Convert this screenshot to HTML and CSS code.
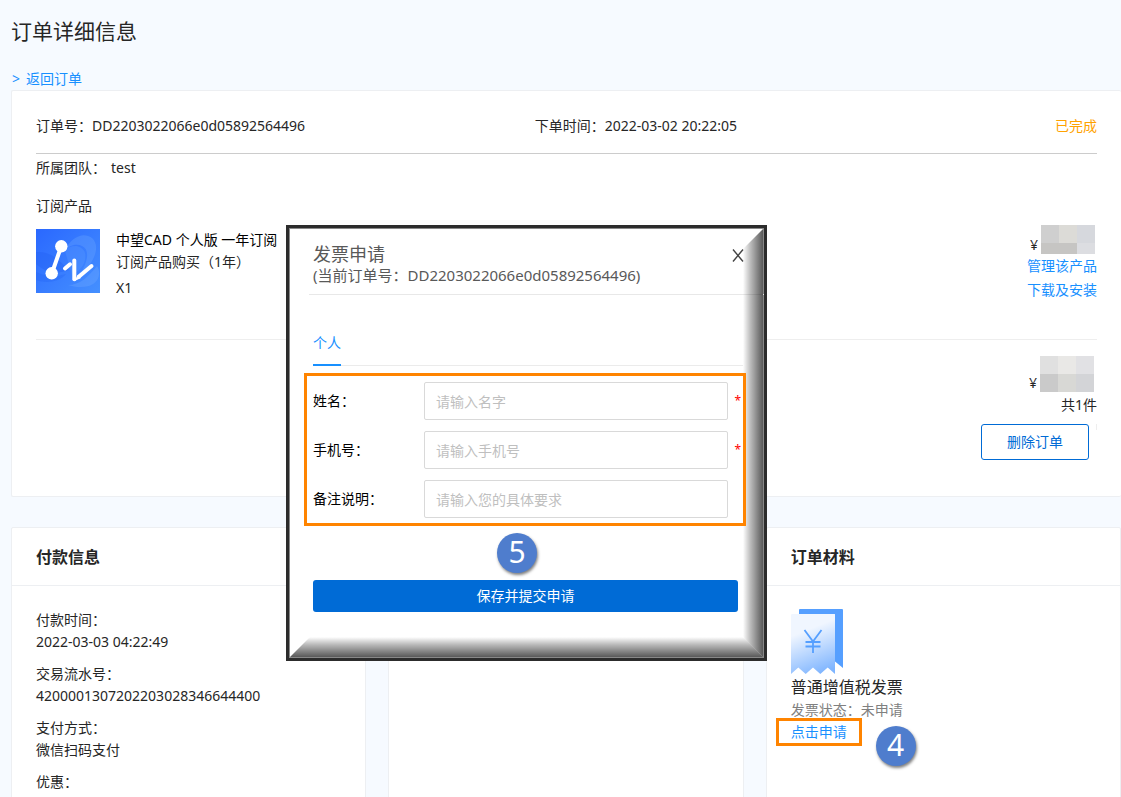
FILE: index.html
```html
<!DOCTYPE html>
<html lang="zh-CN">
<head>
<meta charset="utf-8">
<meta name="viewport" content="width=device-width, initial-scale=1">
<title>订单详细信息</title>
<link rel="stylesheet" href="styles.css">
</head>
<body>
<main class="page">
  <h1 class="page-title">订单详细信息</h1>
  <a class="back" href="#orders"><span>&gt;</span><span>返回订单</span></a>

  <section class="card order">
    <div class="order-head">
      <span class="order-no">订单号：DD2203022066e0d05892564496</span>
      <span class="order-time">下单时间：2022-03-02 20:22:05</span>
      <span class="order-status">已完成</span>
    </div>
    <p class="team">所属团队：<span class="team-name">test</span></p>
    <h2 class="sub-title">订阅产品</h2>
    <div class="product">
      <svg class="product-logo" viewBox="0 0 64 64" aria-hidden="true">
        <defs>
          <linearGradient id="logo-bg" x1="0" y1="0" x2="1" y2="1">
            <stop offset="0" stop-color="#2a68ff"/>
            <stop offset="1" stop-color="#4590ff"/>
          </linearGradient>
        </defs>
        <rect width="64" height="64" fill="url(#logo-bg)"/>
        <path d="M0 23C14 22 22 30 33 41C20 46 9 43 0 35Z" fill="#1d5af0" opacity=".3"/>
        <path d="M29 22C34 9 47 2 56 9C66 18 56 37 45 44C53 30 53 20 46 17C40 14 32 17 29 22Z" fill="#69a5ff" opacity=".35"/>
        <path d="M29 22C34 15 46 15 49 24C51 34 44 42 36 46Z" fill="#5595ff" opacity=".4"/>
        <path d="M32 56C44 56 52 48 61 37C66 45 62 54 53 57C45 59 38 58 32 56Z" fill="#69a5ff" opacity=".4"/>
        <path d="M0 43C10 48 20 48 30 45C24 53 10 55 0 51Z" fill="#1d5af0" opacity=".25"/>
        <g fill="none" stroke="#fff" stroke-width="4" stroke-linecap="round">
          <path d="M25 18L16 44"/>
          <path d="M29 39.500L34 35.300"/>
          <path d="M38.300 31.500V50.300"/>
          <path d="M43 47.500L55.500 37"/>
        </g>
        <path d="M38.300 52.300L45 49L41.500 46Z" fill="#fff"/>
        <circle cx="25.300" cy="17.300" r="6.200" fill="#fff"/>
        <circle cx="15.700" cy="44.300" r="6.200" fill="#fff"/>
      </svg>
      <div class="product-text">
        <p class="product-name">中望CAD 个人版 一年订阅</p>
        <p>订阅产品购买（1年）</p>
        <p class="product-count">X1</p>
      </div>
      <div class="product-side">
        <div class="price">
          <span>¥</span>
          <svg width="54" height="29" viewBox="0 0 54 29" shape-rendering="crispEdges" aria-hidden="true">
            <rect width="18" height="18" fill="#cfcfcf"/>
            <rect x="18" width="18" height="18" fill="#dcdbd7"/>
            <rect x="36" width="18" height="18" fill="#d6d8dd"/>
            <rect y="18" width="36" height="11" fill="#c6c5c3"/>
            <rect x="36" y="18" width="18" height="11" fill="#dcdde1"/>
          </svg>
        </div>
        <a href="#manage">管理该产品</a>
        <a href="#download">下载及安装</a>
      </div>
    </div>
    <div class="total">
      <div class="price">
        <span>¥</span>
        <svg width="54" height="36" viewBox="0 0 54 36" shape-rendering="crispEdges" aria-hidden="true">
          <rect width="18" height="18" fill="#e0e0e0"/>
          <rect x="18" width="18" height="18" fill="#e9e8e6"/>
          <rect x="36" width="18" height="18" fill="#e1e1e4"/>
          <rect y="18" width="18" height="18" fill="#cacaca"/>
          <rect x="18" y="18" width="18" height="18" fill="#d8d8d5"/>
          <rect x="36" y="18" width="18" height="18" fill="#d3d4d7"/>
        </svg>
      </div>
      <p class="total-count">共1件</p>
      <div class="total-actions">
        <button class="btn-outline" type="button">删除订单</button>
      </div>
    </div>
  </section>

  <div class="columns">
    <section class="card panel">
      <h2 class="panel-title">付款信息</h2>
      <dl class="panel-body facts">
        <div><dt>付款时间：</dt><dd>2022-03-03 04:22:49</dd></div>
        <div><dt>交易流水号：</dt><dd>4200001307202203028346644400</dd></div>
        <div><dt>支付方式：</dt><dd>微信扫码支付</dd></div>
        <div><dt>优惠：</dt><dd></dd></div>
      </dl>
    </section>
    <section class="card panel">
      <div class="panel-title"></div>
    </section>
    <section class="card panel">
      <h2 class="panel-title">订单材料</h2>
      <div class="panel-body materials">
        <svg class="invoice-icon" viewBox="0 0 52 65" aria-hidden="true">
          <defs>
            <linearGradient id="paper" x1=".35" y1="0" x2=".65" y2="1">
              <stop offset=".25" stop-color="#f0f6ff"/>
              <stop offset="1" stop-color="#7fb5ff"/>
            </linearGradient>
          </defs>
          <path d="M8 1Q8 0 9 0H51Q52 0 52 1V59L44 52.500V6Q44 5 43 5H8Z" fill="#559fff"/>
          <path d="M0 6Q0 5 1 5H43Q44 5 44 6V65L36.700 58.500L29.300 65L22 58.500L14.700 65L7.300 58.500L0 65Z" fill="url(#paper)"/>
          <path d="M13.500 21L22 32.500L30.500 21M22 32.500V44M14.500 33H29.500M14.500 37.500H29.500" fill="none" stroke="#559fff" stroke-width="1.800"/>
        </svg>
        <h3 class="invoice-name">普通增值税发票</h3>
        <p class="invoice-state">发票状态：未申请</p>
        <a class="apply" href="#apply">点击申请<span class="step step-four">4</span></a>
      </div>
    </section>
  </div>
</main>

<div class="modal" role="dialog" aria-labelledby="modal-title">
  <header class="modal-head">
    <div>
      <h2 class="modal-title" id="modal-title">发票申请</h2>
      <p class="modal-sub">(当前订单号：DD2203022066e0d05892564496)</p>
    </div>
    <button class="close" type="button" aria-label="关闭">
      <svg width="12" height="13" viewBox="0 0 12 13" aria-hidden="true"><path d="M1 .5L11 12.500M11 .5L1 12.500" stroke="#444" stroke-width="1.400" fill="none"/></svg>
    </button>
  </header>
  <form class="modal-form">
    <div class="tabs" role="tablist">
      <button class="tab" type="button" role="tab" aria-selected="true">个人</button>
    </div>
    <div class="fields">
      <label for="name">姓名：</label>
      <input id="name" type="text" placeholder="请输入名字" required>
      <span class="required">*</span>
      <label for="phone">手机号：</label>
      <input id="phone" type="tel" placeholder="请输入手机号" required>
      <span class="required">*</span>
      <label for="remark">备注说明：</label>
      <input id="remark" type="text" placeholder="请输入您的具体要求">
    </div>
    <span class="step step-five">5</span>
    <button class="btn-primary" type="submit">保存并提交申请</button>
  </form>
</div>
</body>
</html>
```

FILE: styles.css
```css
* {
  box-sizing: border-box;
}

body {
  position: relative;
  margin: 0;
  min-height: 100vh;
  overflow: hidden;
  background: #f6faff;
  color: #262626;
  font: 14px/22px "Noto Sans", "Noto Sans CJK SC", sans-serif;
}

h1, h2, h3, p, dl, dd {
  margin: 0;
}

h1, h2, h3 {
  font-weight: 400;
}

a {
  color: #1890ff;
  text-decoration: none;
}

button, input {
  font: inherit;
}

.page {
  height: 100vh;
  padding: 16px 0 0 11px;
  overflow: hidden;
}

.page-title {
  font-size: 21px;
  line-height: 30px;
}

.back {
  display: flex;
  gap: 6px;
  margin: 22px 0 0 1px;
}

.card {
  background: #fff;
  border: 1px solid #edeff2;
  border-radius: 2px;
}

/* Order summary */
.order {
  padding: 0 24px 36px;
  border-right: 0;
}

.order-head {
  display: grid;
  grid-template-columns: 47% 1fr auto;
  padding: 24px 0 16px;
  border-bottom: 1px solid #ccc;
}

.order-status {
  color: #ffa200;
}

.team {
  margin-top: 3px;
}

.team-name {
  margin-left: 5px;
}

.sub-title {
  margin-top: 16px;
  font-size: 14px;
}

.product {
  display: flex;
  min-height: 123px;
  border-bottom: 1px solid #eee;
}

.product-logo {
  width: 64px;
  height: 64px;
  margin-top: 12px;
}

.product-text {
  flex: 1;
  margin: 12px 0 0 16px;
}

.product-name {
  color: #000;
}

.product-count {
  margin-top: 4px;
}

.product-side {
  display: flex;
  flex-direction: column;
  align-items: flex-end;
  padding-top: 8px;
  line-height: 24px;
}

.price {
  display: flex;
  align-items: flex-end;
  gap: 3px;
  margin-right: 2px;
  line-height: 18px;
}

.total {
  display: flex;
  flex-direction: column;
  align-items: flex-end;
  padding-top: 16px;
}

.total .price {
  margin-right: 3px;
}

.total-count {
  margin-top: 2px;
}

.total-actions {
  margin-top: 8px;
  padding-right: 8px;
  background: linear-gradient(#eee, #eee) right top / 1px 6px no-repeat;
}

.btn-outline {
  width: 108px;
  height: 36px;
  padding: 0;
  background: #fff;
  border: 1px solid #006bd6;
  border-radius: 3px;
  color: #006bd6;
}

/* Detail panels */
.columns {
  display: grid;
  grid-template-columns: repeat(3, 1fr);
  gap: 22px;
  margin-top: 30px;
}

.panel {
  min-height: 320px;
}

.panel-title {
  height: 58px;
  padding: 0 24px;
  border-bottom: 1px solid #edeff2;
  font-size: 16px;
  font-weight: 700;
  line-height: 58px;
}

.panel-body {
  padding: 23px 24px;
}

.facts {
  display: grid;
  gap: 10px;
}

.materials {
  display: flex;
  flex-direction: column;
  align-items: flex-start;
}

.invoice-icon {
  width: 52px;
  height: 65px;
}

.invoice-name {
  margin-top: 2px;
  font-size: 16px;
  line-height: 23px;
}

.invoice-state {
  color: #808080;
}

.apply {
  position: relative;
}

.apply::before {
  content: "";
  position: absolute;
  inset: -3px -15px;
  border: 3px solid #ff8400;
}

/* Numbered step markers */
.step {
  width: 40px;
  height: 40px;
  border-radius: 50%;
  background: #4f7dcd;
  box-shadow: 1px 2px 3px rgba(0, 0, 0, .5);
  color: #fff;
  font: 30px/38px "Noto Sans", sans-serif;
  text-align: center;
}

.step-four {
  position: absolute;
  top: 5px;
  left: 85px;
}

/* Invoice dialog */
.modal {
  position: absolute;
  top: 225px;
  left: 286px;
  width: 481px;
  padding: 15px 0 46px;
  background: #fff;
  border: 3px solid #2c2c2c;
  box-shadow: inset 0 0 0 1px #888;
}

.modal::before,
.modal::after {
  content: "";
  position: absolute;
  pointer-events: none;
}

.modal::before {
  top: 1px;
  right: 1px;
  bottom: 1px;
  width: 20px;
  background: linear-gradient(to right, rgba(0, 0, 0, 0), rgba(0, 0, 0, .25) 35%, rgba(0, 0, 0, .65));
  clip-path: polygon(100% 0, 100% 100%, 0 calc(100% - 20px), 0 20px);
}

.modal::after {
  right: 1px;
  bottom: 1px;
  left: 1px;
  height: 20px;
  background: linear-gradient(to bottom, rgba(0, 0, 0, 0), rgba(0, 0, 0, .25) 35%, rgba(0, 0, 0, .65));
  clip-path: polygon(20px 0, calc(100% - 20px) 0, 100% 100%, 0 100%);
}

.modal-head {
  display: flex;
  justify-content: space-between;
  align-items: flex-start;
  margin-left: 20px;
  padding: 0 14px 9px 4px;
  border-bottom: 1px solid #e8e8e8;
  color: #595959;
}

.modal-title {
  font-size: 18px;
  line-height: 23px;
}

.modal-sub {
  font-size: 15px;
  line-height: 19px;
}

.close {
  display: flex;
  padding: 6px;
  background: none;
  border: 0;
}

.modal-form {
  display: flex;
  flex-direction: column;
  padding: 33px 26px 0 24px;
}

.tabs {
  margin-right: -5px;
  border-bottom: 1px solid #ebebeb;
}

.tab {
  margin-bottom: -1px;
  padding: 4px 0 10px;
  background: none;
  border: 0;
  border-bottom: 2px solid #1890ff;
  color: #1890ff;
  line-height: 22px;
  vertical-align: top;
}

.fields {
  position: relative;
  z-index: 1;
  display: grid;
  grid-template-columns: 111px 1fr 13px;
  align-items: center;
  gap: 11px 0;
  margin: 7px -8px 0 -9px;
  padding: 6px 2px 5px 6px;
  border: 3px solid #ff8400;
}

.fields input {
  width: 100%;
  min-width: 0;
  height: 38px;
  padding: 0 11px;
  background: #fff;
  border: 1px solid #d9d9d9;
  border-radius: 2px;
}

.fields input::placeholder {
  color: #bfbfbf;
}

.fields .required {
  color: #f00;
  font-size: 12px;
  text-align: right;
}

.fields label {
  color: #000;
}

.step-five {
  margin: 7px 0 7px 184px;
}

.btn-primary {
  height: 32px;
  background: #006bd6;
  border: 0;
  border-radius: 3px;
  color: #fff;
}
```
